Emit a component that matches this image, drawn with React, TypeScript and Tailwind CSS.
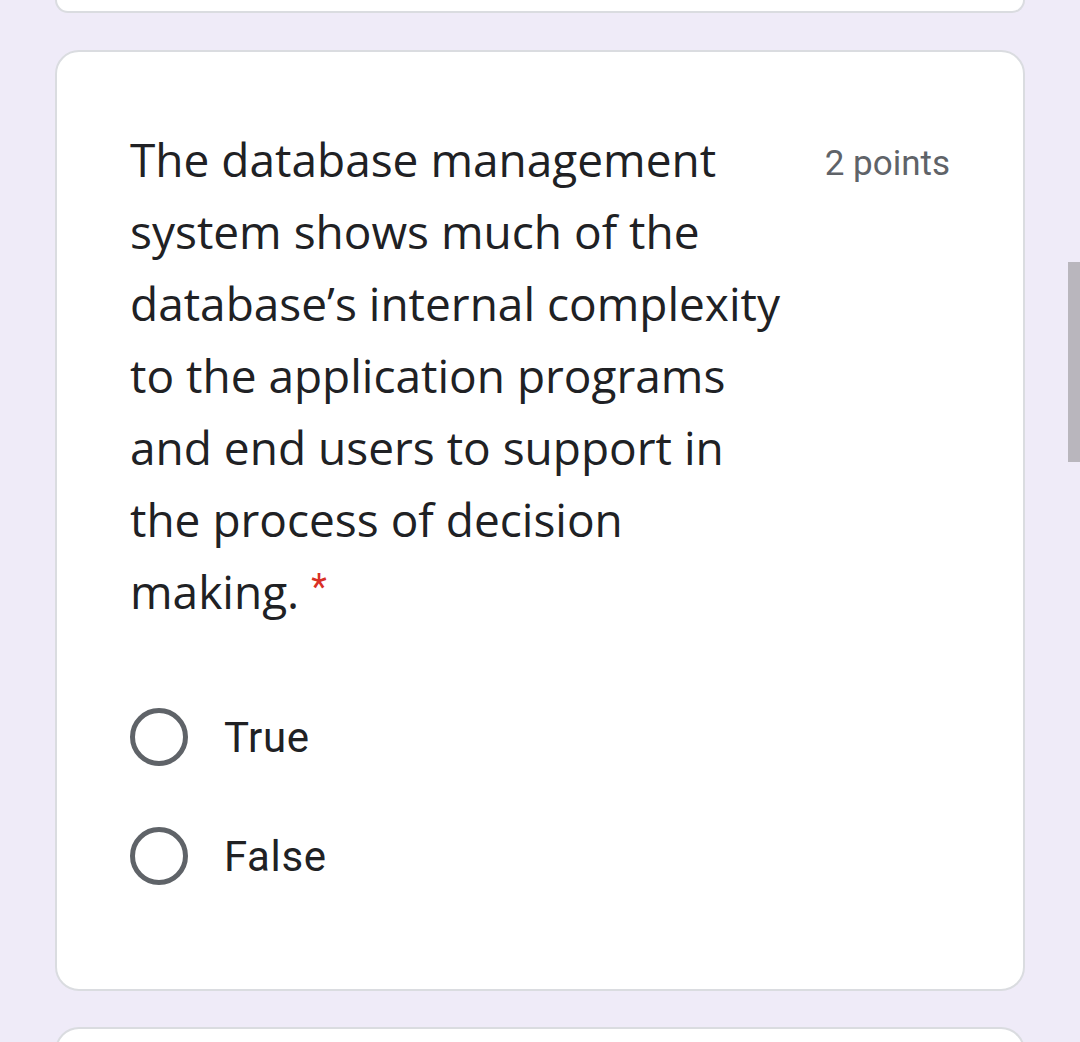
import React from "react";

function Radio({ label }: { label: string }) {
  return (
    <div className="flex items-center h-[60px]">
      <span className="w-[58px] h-[58px] rounded-full border-[5px] border-[#5f6368] box-border" />
      <span className="ml-[36px] text-[42px] tracking-[0.6px] text-[#202124] font-['Roboto',sans-serif]">{label}</span>
    </div>
  );
}

export default function App() {
  return (
    <div className="min-h-[1042px] bg-[#efebf8] px-[55px] overflow-hidden relative">
      {/* previous card (only its bottom shows) */}
      <div className="h-[13px] bg-white border-x-2 border-b-2 border-[#dadce0] rounded-b-[24px]" />

      {/* question card */}
      <div className="mt-[37px] h-[941px] bg-white border-2 border-[#dadce0] rounded-[24px] pl-[73px] pr-[73px] pt-[71px]">
        <div className="flex justify-between items-start">
          <div className="w-[668px] text-[46px] leading-[72px] text-[#202124] font-['Open_Sans',sans-serif]">
            The database management system shows much of the database’s internal complexity to the application programs and end users to support in the process of decision making.
            <span className="text-[#d93025] ml-[12px] text-[36px] leading-none font-['Roboto',sans-serif] align-top inline-block mt-[14px]">*</span>
          </div>
          <div className="pt-[19px] text-[35px] text-[#5f6368] font-['Roboto',sans-serif] leading-[44px]">2 points</div>
        </div>

        <div className="mt-[80px] flex flex-col gap-[59px]">
          <Radio label="True" />
          <Radio label="False" />
        </div>
      </div>

      {/* next card */}
      <div className="mt-[36px] h-[60px] bg-white border-x-2 border-t-2 border-[#dadce0] rounded-t-[24px]" />

      {/* scrollbar */}
      <div className="absolute right-0 top-[262px] w-[12px] h-[200px] bg-[#b9b6bd]" />
    </div>
  );
}
